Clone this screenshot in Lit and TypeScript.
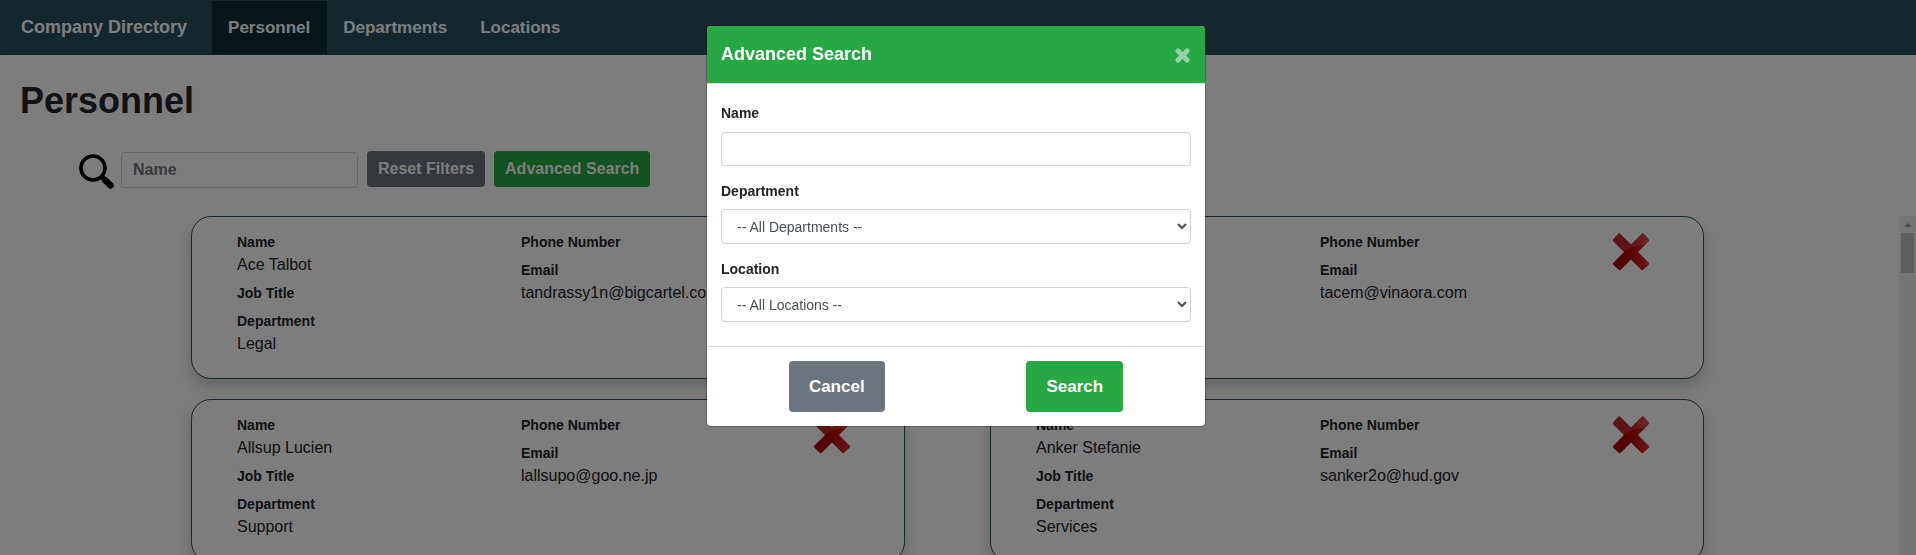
import { LitElement, html, css } from "lit";
import { customElement, property } from "lit/decorators.js";

interface Person {
  name: string;
  job: string;
  department: string;
  phone: string;
  email: string;
}

const PEOPLE: Person[] = [
  { name: "Ace Talbot", job: "", department: "Legal", phone: "", email: "tandrassy1n@bigcartel.com" },
  { name: "Ace Tamarra", job: "", department: "Services", phone: "", email: "tacem@vinaora.com" },
  { name: "Allsup Lucien", job: "", department: "Support", phone: "", email: "lallsupo@goo.ne.jp" },
  { name: "Anker Stefanie", job: "", department: "Services", phone: "", email: "sanker2o@hud.gov" },
];

@customElement("person-card")
export class PersonCard extends LitElement {
  @property({ attribute: false }) person!: Person;

  static styles = css`
    :host {
      display: grid;
      grid-template-columns: 284px 1fr 38px;
      align-items: start;
      box-sizing: border-box;
      padding: 15px 53px 16px 45px;
      border: 1px solid #2b4f5c;
      border-radius: 20px;
      background: #fff;
      box-shadow: 0 8px 16px rgba(0, 0, 0, 0.2);
    }
    .fields {
      margin: 0;
    }
    .label {
      font-size: 14px;
      font-weight: 700;
      line-height: 20px;
    }
    .value {
      margin: 0;
      padding-bottom: 8px;
      font-size: 16px;
      line-height: 25px;
    }
    .value:not(:empty) {
      padding-bottom: 6px;
    }
    .remove {
      padding: 1px 0 0;
      margin: 0;
      border: 0;
      background: none;
      line-height: 0;
      cursor: pointer;
    }
    .cross {
      width: 38px;
      height: 40px;
    }
  `;

  private field(label: string, value: string) {
    return html`<dt class="label">${label}</dt>
      ${value ? html`<dd class="value">${value}</dd>` : html`<dd class="value"></dd>`}`;
  }

  render() {
    const p = this.person;
    return html`
      <dl class="fields">
        ${this.field("Name", p.name)} ${this.field("Job Title", p.job)}
        ${this.field("Department", p.department)}
      </dl>
      <dl class="fields">${this.field("Phone Number", p.phone)} ${this.field("Email", p.email)}</dl>
      <button class="remove" aria-label="Delete">
        <svg class="cross" viewBox="0 0 38 40">
          <defs>
            <linearGradient id="base" x1="0" y1="0.8" x2="1" y2="0.9">
              <stop offset="0.2" stop-color="#b00000" />
              <stop offset="0.5" stop-color="#b80606" />
              <stop offset="1" stop-color="#e03838" />
            </linearGradient>
            <clipPath id="shape">
              <path d="M6.500 0.500 Q7.500 0 8.500 1 L19 11.500 L29.500 1 Q30.500 0 31.500 0.500 L37 6.500 Q37.500 7.500 36.500 8.500 L26 19 L36.500 29.500 Q37.500 30.500 37 31.500 L31 37 Q30 37.500 29 36.500 L19 26.500 L9 36.500 Q8 37.500 7 37 L1 31.500 Q0.500 30.500 1.500 29.500 L12 19 L1.500 8.500 Q0.500 7.500 1 6.500 Z" />
            </clipPath>
          </defs>
          <g clip-path="url(#shape)">
            <rect width="38" height="40" fill="url(#base)" />
            <path d="M0 0 H38 V12 C28 12 20 13 12 18 L0 24 Z" fill="#fff" opacity="0.16" />
          </g>
        </svg>
      </button>
    `;
  }
}

@customElement("search-dialog")
export class SearchDialog extends LitElement {
  static styles = css`
    :host {
      position: fixed;
      inset: 0;
      display: flex;
      justify-content: center;
      align-items: flex-start;
      padding: 25px 4px 0 0;
      background: rgba(0, 0, 0, 0.51);
      z-index: 10;
    }
    .dialog {
      box-sizing: border-box;
      width: 500px;
      max-width: 100%;
      border: 1px solid rgba(0, 0, 0, 0.2);
      border-radius: 5px;
      background: #fff;
      background-clip: padding-box;
    }
    .head {
      display: flex;
      justify-content: space-between;
      align-items: center;
      padding: 15px 15px 15px 14px;
      border-bottom: 1px solid #dee2e6;
      border-radius: 4px 4px 0 0;
      background: #28a745;
      background-clip: padding-box;
      color: #fff;
    }
    .title {
      margin: 0;
      font-size: 18px;
      line-height: 27px;
    }
    .close {
      padding: 0;
      border: 0;
      background: none;
      line-height: 0;
      cursor: pointer;
    }
    .body {
      display: flex;
      flex-direction: column;
      gap: 15px;
      padding: 19px 14px 24px;
    }
    .group {
      display: flex;
      flex-direction: column;
      gap: 7px;
    }
    .group:first-child {
      gap: 8px;
    }
    .label {
      font-size: 14px;
      font-weight: 700;
      line-height: 21px;
    }
    .control {
      box-sizing: border-box;
      width: 100%;
      height: 34px;
      padding: 0 12px;
      border: 1px solid #ced4da;
      border-radius: 4px;
      background: #fff;
      color: #495057;
      font: 14px "Liberation Sans", Arial, sans-serif;
    }
    select.control {
      height: 35px;
      padding: 0 11px;
    }
    .foot {
      display: flex;
      justify-content: space-around;
      padding: 14px 11px;
      border-top: 1px solid #dee2e6;
    }
    .btn {
      padding: 12px 20px;
      border: 0;
      border-radius: 4px;
      color: #fff;
      font: 700 17px/27px "Liberation Sans", Arial, sans-serif;
      cursor: pointer;
    }
    .grey {
      background: #6c757d;
    }
    .green {
      background: #28a745;
    }
  `;

  render() {
    return html`
      <form class="dialog" role="dialog" aria-labelledby="title">
        <div class="head">
          <h2 class="title" id="title">Advanced Search</h2>
          <button class="close" type="button" aria-label="Close">
            <svg width="15" height="16" viewBox="0 0 15 16">
              <path d="M3 4 L12 13 M12 4 L3 13" stroke="#fff" stroke-opacity="0.5" stroke-width="5" stroke-linecap="round" />
            </svg>
          </button>
        </div>
        <div class="body">
          <div class="group">
            <label class="label" for="name">Name</label>
            <input class="control" id="name" type="text" />
          </div>
          <div class="group">
            <label class="label" for="department">Department</label>
            <select class="control" id="department">
              <option>-- All Departments --</option>
            </select>
          </div>
          <div class="group">
            <label class="label" for="location">Location</label>
            <select class="control" id="location">
              <option>-- All Locations --</option>
            </select>
          </div>
        </div>
        <div class="foot">
          <button class="btn grey" type="button">Cancel</button>
          <button class="btn green" type="button">Search</button>
        </div>
      </form>
    `;
  }
}

@customElement("app-root")
export class AppRoot extends LitElement {
  static styles = css`
    :host {
      display: flex;
      flex-direction: column;
      height: 100vh;
      overflow: hidden;
      background: #fff;
      color: #212529;
      font-family: "Liberation Sans", Arial, sans-serif;
      font-size: 16px;
    }
    .nav {
      display: flex;
      flex: none;
      align-items: stretch;
      padding: 1px 21px;
      background: #2b4f5c;
      font-weight: 700;
      line-height: 53px;
    }
    .brand,
    .link {
      color: #fff;
      text-decoration: none;
    }
    .brand {
      margin-right: 25px;
      font-size: 18px;
    }
    .link {
      padding: 0 17px 0 16px;
      font-size: 17px;
    }
    .active {
      background: #112e34;
    }
    .top {
      flex: none;
      padding: 24px 20px 27px;
      box-shadow: 0 4px 12px rgba(0, 0, 0, 0.08);
    }
    .heading {
      margin: 0 0 29px;
      font-size: 36px;
      line-height: 43px;
    }
    .filters {
      display: flex;
      align-items: flex-start;
      padding-left: 58px;
    }
    .lens {
      width: 37px;
      height: 38px;
      margin-right: 6px;
    }
    .quick {
      box-sizing: border-box;
      width: 237px;
      height: 36px;
      margin: 1px 9px 0 0;
      padding: 0 11px;
      border: 1px solid #ced4da;
      border-radius: 4px;
      background: #fff;
      font: 700 16px "Liberation Sans", Arial, sans-serif;
    }
    .quick::placeholder {
      color: #6c757d;
      opacity: 1;
    }
    .btn {
      margin-right: 9px;
      padding: 6px 11px;
      border: 0;
      border-radius: 4px;
      color: #fff;
      font: 700 16px/24px "Liberation Sans", Arial, sans-serif;
      cursor: pointer;
    }
    .grey {
      background: #6c757d;
    }
    .green {
      background: #28a745;
    }
    .list {
      display: flex;
      flex: 1;
      min-height: 0;
    }
    .cards {
      display: grid;
      flex: 1;
      grid-template-columns: 1fr 1fr;
      align-content: start;
      gap: 20px 85px;
      padding: 0 195px 0 191px;
      overflow: hidden;
      position: relative;
      background: #fff;
    }
    .scrollbar {
      position: relative;
      display: flex;
      flex-direction: column;
      gap: 6px;
      align-items: center;
      box-sizing: border-box;
      width: 17px;
      padding-top: 7px;
      background: #f1f1f1;
    }
    .thumb {
      width: 13px;
      height: 40px;
      background: #c1c1c1;
    }
  `;

  render() {
    return html`
      <nav class="nav">
        <a class="brand" href="#">Company Directory</a>
        <a class="link active" href="#personnel">Personnel</a>
        <a class="link" href="#departments">Departments</a>
        <a class="link" href="#locations">Locations</a>
      </nav>
      <header class="top">
        <h1 class="heading">Personnel</h1>
        <div class="filters">
          <svg class="lens" viewBox="0 0 37 38">
            <circle cx="15" cy="17" r="12" fill="none" stroke="#000" stroke-width="3.600" />
            <path d="M23 25 L28 30" stroke="#000" stroke-width="5" />
            <path d="M27 29 L32.500 34.500" stroke="#000" stroke-width="6.500" stroke-linecap="round" />
          </svg>
          <input class="quick" type="text" placeholder="Name" aria-label="Name" />
          <button class="btn grey">Reset Filters</button>
          <button class="btn green">Advanced Search</button>
        </div>
      </header>
      <main class="list">
        <div class="cards">${PEOPLE.map((p) => html`<person-card .person=${p}></person-card>`)}</div>
        <div class="scrollbar" aria-hidden="true">
          <svg width="8" height="4" viewBox="0 0 8 4"><path d="M0 4 L4 0 L8 4 Z" fill="#a0a0a0" /></svg>
          <div class="thumb"></div>
        </div>
      </main>
      <search-dialog></search-dialog>
    `;
  }
}
